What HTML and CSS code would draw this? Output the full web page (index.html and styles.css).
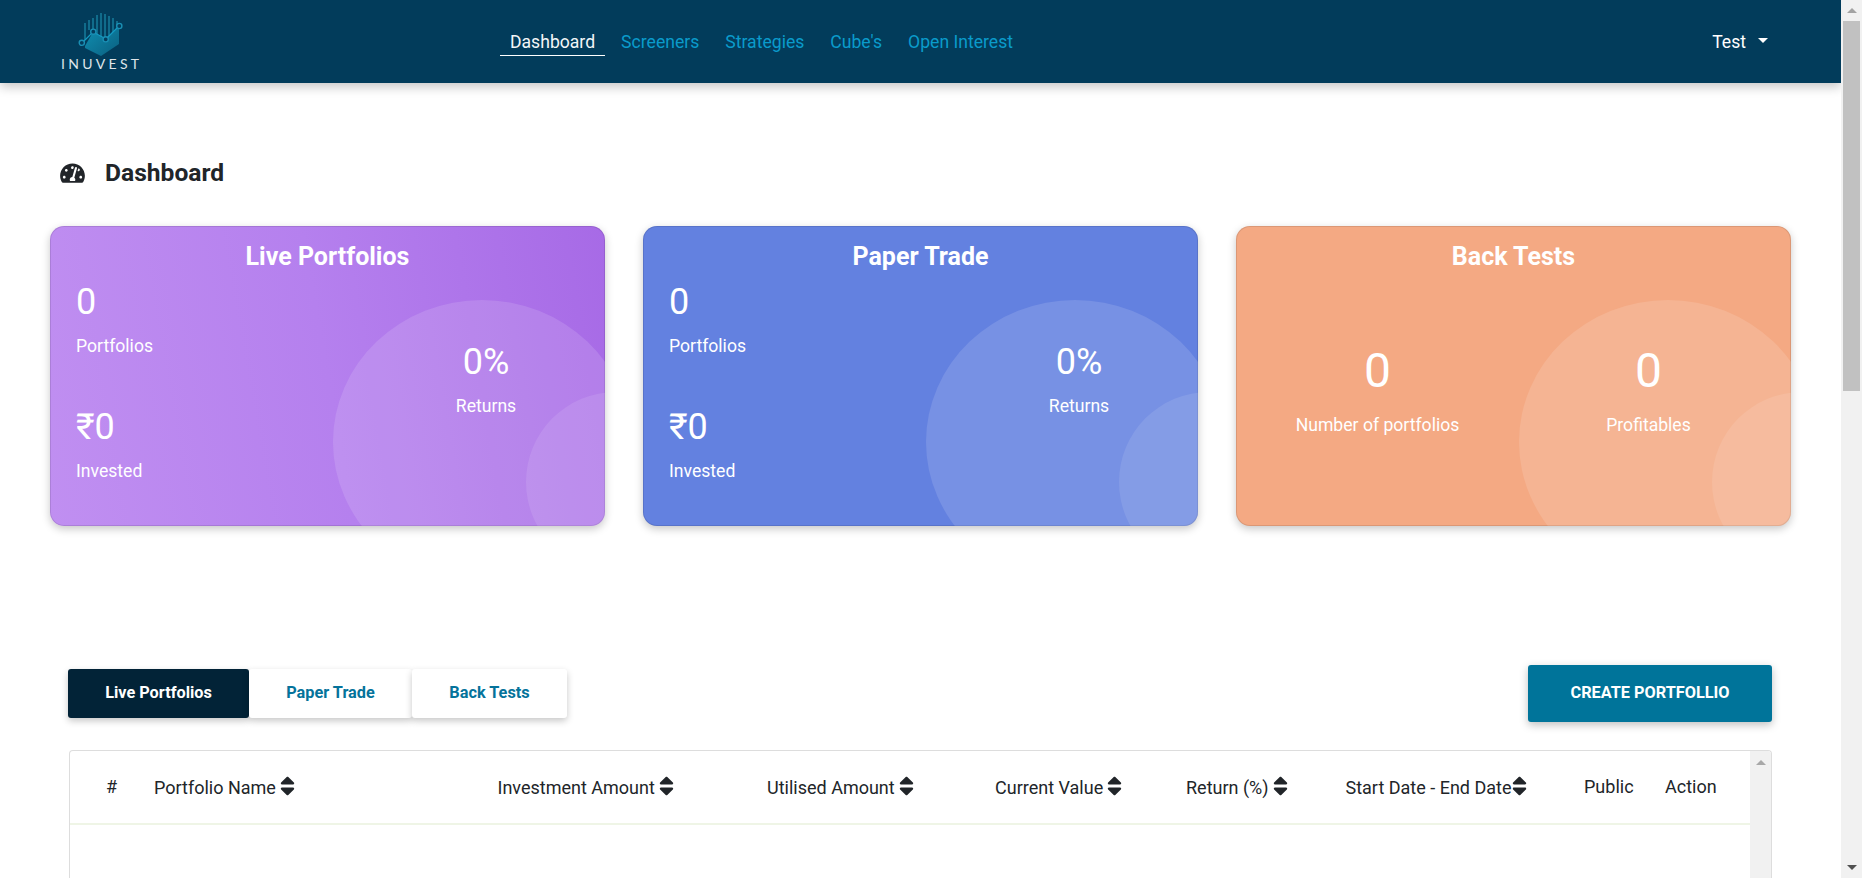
FILE: index.html
```html
<!DOCTYPE html>
<html lang="en">
<head>
<meta charset="utf-8">
<title>Inuvest Dashboard</title>
<link rel="stylesheet" href="styles.css">
</head>
<body>
<div class="viewport">
  <div class="page">
    <header class="navbar">
      <a class="brand" href="#">
        <svg class="brand-mark" viewBox="0 0 46 44" aria-hidden="true">
          <defs>
            <linearGradient id="lg" x1="0" y1="0" x2="1" y2="1">
              <stop offset="0" stop-color="#1090b2"/>
              <stop offset="1" stop-color="#0a5f80"/>
            </linearGradient>
          </defs>
          <g stroke="#1a86a6" stroke-width="1.3">
            <path d="M7 10V27M11 7V17M15 5V17M19 2V24M23 0V24M27 1V24M31 3V24M35 5V19M39 8V14"/>
          </g>
          <path fill="url(#lg)" d="M7 33L15 19L27 26L41 13V31L23 43L7 35Z"/>
          <path fill="none" stroke="#149ac2" stroke-width="1.2" d="M4 30L15 19L28 26L41 13"/>
          <g fill="#033c5c" stroke="#1a8fb4" stroke-width="1.4">
            <circle cx="3.8" cy="29.8" r="2.6"/>
            <circle cx="15.3" cy="18.7" r="2.6"/>
            <circle cx="27.7" cy="26.3" r="2.6"/>
            <circle cx="41.3" cy="13" r="2.6"/>
          </g>
        </svg>
        <span class="brand-name">INUVEST</span>
      </a>
      <nav class="nav-links">
        <a class="nav-link active" href="#">Dashboard</a>
        <a class="nav-link" href="#">Screeners</a>
        <a class="nav-link" href="#">Strategies</a>
        <a class="nav-link" href="#">Cube's</a>
        <a class="nav-link" href="#">Open Interest</a>
      </nav>
      <a class="user-menu" href="#">Test<span class="caret"></span></a>
    </header>

    <main>
      <h1 class="page-title">
        <svg class="title-icon" viewBox="0 0 576 512" aria-hidden="true"><path fill="currentColor" d="M288 32C128.94 32 0 160.94 0 320c0 52.8 14.25 102.26 39.06 144.8 5.61 9.62 16.3 15.2 27.44 15.2h443c11.14 0 21.83-5.58 27.44-15.2C561.75 422.26 576 372.8 576 320c0-159.06-128.94-288-288-288zm0 64c14.71 0 26.58 10.13 30.32 23.65-1.11 2.26-2.64 4.23-3.35 6.67l-9.22 32.26c-5.72 4.15-12.4 7.1-18.74 7.1-17.67 0-32-14.33-32-32 0-17.67 14.33-32 32-32zM96 384c-17.67 0-32-14.33-32-32s14.33-32 32-32 32 14.33 32 32-14.33 32-32 32zm48-160c-17.67 0-32-14.33-32-32s14.33-32 32-32 32 14.33 32 32-14.33 32-32 32zm246.77-72.41l-61.33 214.59c14.56 10.72 24.56 27.36 24.56 46.82 0 11.72-3.38 22.55-8.88 32H232.88c-5.5-9.45-8.88-20.28-8.88-32 0-33.94 26.5-61.43 59.9-63.59l61.34-214.62c3.59-12.72 16.91-20.22 29.66-16.47 12.72 3.63 20.09 16.91 16.47 29.67zm14.66 57.2l15.52-54.31c2.27-2.22 4.44-3.55 6.05-3.48 17.67 0 32 14.33 32 32 0 17.67-14.33 32-32 32-8.6 0-15.86-3.4-21.57-6.21zM480 384c-17.67 0-32-14.33-32-32s14.33-32 32-32 32 14.33 32 32-14.33 32-32 32z"/></svg>
        Dashboard
      </h1>

      <section class="cards">
        <article class="card card-live">
          <span class="circle circle-lg"></span><span class="circle circle-sm"></span>
          <h2 class="card-title">Live Portfolios</h2>
          <div class="card-body">
            <div class="card-left">
              <div class="stat"><div class="stat-value">0</div><div class="stat-label">Portfolios</div></div>
              <div class="stat"><div class="stat-value">₹0</div><div class="stat-label">Invested</div></div>
            </div>
            <div class="stat card-right"><div class="stat-value">0%</div><div class="stat-label">Returns</div></div>
          </div>
        </article>
        <article class="card card-paper">
          <span class="circle circle-lg"></span><span class="circle circle-sm"></span>
          <h2 class="card-title">Paper Trade</h2>
          <div class="card-body">
            <div class="card-left">
              <div class="stat"><div class="stat-value">0</div><div class="stat-label">Portfolios</div></div>
              <div class="stat"><div class="stat-value">₹0</div><div class="stat-label">Invested</div></div>
            </div>
            <div class="stat card-right"><div class="stat-value">0%</div><div class="stat-label">Returns</div></div>
          </div>
        </article>
        <article class="card card-back">
          <span class="circle circle-lg"></span><span class="circle circle-sm"></span>
          <h2 class="card-title">Back Tests</h2>
          <div class="card-body-back">
            <div class="stat stat-big"><div class="stat-value">0</div><div class="stat-label">Number of portfolios</div></div>
            <div class="stat stat-big"><div class="stat-value">0</div><div class="stat-label">Profitables</div></div>
          </div>
        </article>
      </section>

      <section class="actions">
        <div class="tabs">
          <button class="tab tab-live active">Live Portfolios</button>
          <button class="tab tab-paper">Paper Trade</button>
          <button class="tab tab-back">Back Tests</button>
        </div>
        <button class="create-btn">CREATE PORTFOLLIO</button>
      </section>

      <section class="table-box">
        <div class="table-wrap">
          <table class="data-table">
            <colgroup>
              <col class="c-idx"><col class="c-name"><col class="c-inv"><col class="c-util"><col class="c-cur"><col class="c-ret"><col class="c-date"><col class="c-pub"><col class="c-act">
            </colgroup>
            <thead>
              <tr>
                <th class="th-idx">#</th>
                <th>Portfolio Name<svg class="sort" viewBox="0 0 320 512"><path fill="currentColor" d="M41 288h238c21.4 0 32.1 25.9 17 41L177 448c-9.4 9.4-24.6 9.4-33.9 0L24 329c-15.1-15.1-4.4-41 17-41zm255-105L177 64c-9.4-9.4-24.6-9.4-33.9 0L24 183c-15.1 15.1-4.4 41 17 41h238c21.4 0 32.1-25.9 17-41z"/></svg></th>
                <th>Investment Amount<svg class="sort" viewBox="0 0 320 512"><path fill="currentColor" d="M41 288h238c21.4 0 32.1 25.9 17 41L177 448c-9.4 9.4-24.6 9.4-33.9 0L24 329c-15.1-15.1-4.4-41 17-41zm255-105L177 64c-9.4-9.4-24.6-9.4-33.9 0L24 183c-15.1 15.1-4.4 41 17 41h238c21.4 0 32.1-25.9 17-41z"/></svg></th>
                <th>Utilised Amount<svg class="sort" viewBox="0 0 320 512"><path fill="currentColor" d="M41 288h238c21.4 0 32.1 25.9 17 41L177 448c-9.4 9.4-24.6 9.4-33.9 0L24 329c-15.1-15.1-4.4-41 17-41zm255-105L177 64c-9.4-9.4-24.6-9.4-33.9 0L24 183c-15.1 15.1-4.4 41 17 41h238c21.4 0 32.1-25.9 17-41z"/></svg></th>
                <th>Current Value<svg class="sort" viewBox="0 0 320 512"><path fill="currentColor" d="M41 288h238c21.4 0 32.1 25.9 17 41L177 448c-9.4 9.4-24.6 9.4-33.9 0L24 329c-15.1-15.1-4.4-41 17-41zm255-105L177 64c-9.4-9.4-24.6-9.4-33.9 0L24 183c-15.1 15.1-4.4 41 17 41h238c21.4 0 32.1-25.9 17-41z"/></svg></th>
                <th>Return (%)<svg class="sort" viewBox="0 0 320 512"><path fill="currentColor" d="M41 288h238c21.4 0 32.1 25.9 17 41L177 448c-9.4 9.4-24.6 9.4-33.9 0L24 329c-15.1-15.1-4.4-41 17-41zm255-105L177 64c-9.4-9.4-24.6-9.4-33.9 0L24 183c-15.1 15.1-4.4 41 17 41h238c21.4 0 32.1-25.9 17-41z"/></svg></th>
                <th>Start Date - End Date<svg class="sort sort-tight" viewBox="0 0 320 512"><path fill="currentColor" d="M41 288h238c21.4 0 32.1 25.9 17 41L177 448c-9.4 9.4-24.6 9.4-33.9 0L24 329c-15.1-15.1-4.4-41 17-41zm255-105L177 64c-9.4-9.4-24.6-9.4-33.9 0L24 183c-15.1 15.1-4.4 41 17 41h238c21.4 0 32.1-25.9 17-41z"/></svg></th>
                <th>Public</th>
                <th>Action</th>
              </tr>
            </thead>
          </table>
        </div>
        <div class="scrollbar scrollbar-inner"><span class="arrow-up arrow-light"></span></div>
      </section>
    </main>
  </div>
  <div class="scrollbar scrollbar-page">
    <span class="arrow-up"></span>
    <span class="thumb"></span>
    <span class="spacer"></span>
    <span class="arrow-down"></span>
  </div>
</div>
</body>
</html>
```
FILE: styles.css
```css
* { box-sizing: border-box; }
html, body { margin: 0; padding: 0; height: 878px; overflow: hidden; }
body { font-family: Roboto, "Liberation Sans", sans-serif; font-size: 17.6px; color: #212529; background: #fff; }
a { text-decoration: none; }

.viewport { display: flex; height: 878px; }
.page { flex: 1; min-width: 0; overflow: hidden; }

/* navbar */
.navbar { height: 83px; background: #023c5b; display: flex; align-items: flex-start; box-shadow: 0 4px 10px rgba(0,0,0,.22); position: relative; z-index: 2; }
.brand { width: 500px; padding: 13px 0 0 61px; display: flex; flex-direction: column; align-items: flex-start; }
.brand-mark { width: 46px; height: 44px; margin-left: 17px; display: block; }
.brand-name { font-family: Lato, Roboto, sans-serif; font-weight: 400; font-size: 14px; line-height: 14px; letter-spacing: 3.3px; color: #dfe5e9; margin-top: 0; }
.nav-links { display: flex; gap: 6px; padding-top: 30px; }
.nav-link { color: #0a9bcb; padding: 0 10px; line-height: 24px; height: 25.5px; }
.nav-link.active { color: #f2f6f8; border-bottom: 1.5px solid #fff; }
.user-menu { margin-left: auto; margin-right: 73px; margin-top: 30px; line-height: 24px; color: #fff; display: flex; align-items: center; }
.caret { width: 0; height: 0; margin-left: 12px; border-left: 5.5px solid transparent; border-right: 5.5px solid transparent; border-top: 5.5px solid #fff; margin-top: -3px; }

/* heading */
.page-title { margin: 72px 0 35px 60px; height: 36px; display: flex; align-items: center; font-size: 24.6px; font-weight: 700; line-height: 36px; }
.title-icon { width: 25px; height: 22px; margin-right: 20px; }

/* cards */
.cards { display: grid; grid-template-columns: repeat(3, 1fr); gap: 38px; padding: 0 50px; }
.card { position: relative; height: 300px; border-radius: 14px; overflow: hidden; color: #fff; box-shadow: inset 0 0 0 1px rgba(0,0,0,.1), 0 3px 9px rgba(0,0,0,.22); padding-top: 13px; }
.card-live { background: linear-gradient(80deg, #c08ff1 0%, #b580ee 50%, #a76ae6 100%); }
.card-paper { background: #6381e0; }
.card-back { background: #f4a983; }
.circle { position: absolute; border-radius: 50%; background: rgba(255,255,255,.13); }
.circle-lg { width: 298px; height: 284px; left: 283px; top: 74px; }
.circle-sm { width: 180px; height: 180px; left: 476px; top: 166px; background: rgba(255,255,255,.1); }
.card-title { position: relative; margin: 0; text-align: center; font-size: 25px; font-weight: 700; line-height: 36px; }
.card-body { position: relative; display: grid; grid-template-columns: 1fr 238px; padding: 7px 0 0 26px; }
.card-right { text-align: center; padding-top: 60px; }
.stat-value { font-size: 36px; line-height: 40px; font-weight: 400; }
.stat-label { margin-top: 12px; line-height: 24px; }
.card-left .stat + .stat { margin-top: 49px; }
.card-body-back { position: relative; display: grid; grid-template-columns: 271px 271px; padding: 68px 6px 0; text-align: center; }
.stat-big .stat-value { font-size: 48px; line-height: 56px; }
.stat-big .stat-label { margin-top: 14px; }

/* actions */
.actions { display: flex; align-items: center; justify-content: space-between; margin: 139px 69px 28px 68px; }
.tabs { display: flex; }
.tab { border: 0; background: #fff; color: #05739b; height: 49px; font: 700 16.3px Roboto, sans-serif; border-radius: 3px; box-shadow: 0 3px 7px rgba(0,0,0,.22); padding: 0 0 2px; }
.tab-live { width: 181px; }
.tab-paper { width: 163px; }
.tab-back { width: 155px; }
.tab.active { background: #022337; color: #fff; }
.create-btn { width: 244px; height: 57px; border: 0; border-radius: 3px; background: #00749a; color: #fff; font: 700 16.3px Roboto, sans-serif; box-shadow: 0 3px 8px rgba(0,0,0,.25); padding: 0 0 2px; }

/* table */
.table-box { display: flex; margin: 0 69px; height: 200px; border: 1px solid #ddd; border-bottom: 0; border-radius: 4px 4px 0 0; overflow: hidden; }
.table-wrap { flex: 1; min-width: 0; }
.data-table { width: 100%; table-layout: fixed; border-collapse: collapse; font-size: 18px; }
.data-table th { height: 73px; padding: 0 0 2px; text-align: left; font-weight: 400; white-space: nowrap; border-bottom: 2px solid #eff5e6; color: #212529; }
.data-table .th-idx { padding-left: 36px; }
.c-idx { width: 84px; }
.c-name { width: 343.5px; }
.c-inv { width: 269.5px; }
.c-util { width: 228px; }
.c-cur { width: 191px; }
.c-ret { width: 159.5px; }
.c-date { width: 238.5px; }
.c-pub { width: 81px; }
.c-act { width: 85px; }
.sort { width: 15px; height: 24px; margin-left: 4px; vertical-align: -4px; color: #212529; }
.sort-tight { margin-left: 0; }

/* scrollbars */
.scrollbar { background: #f1f1f1; display: flex; flex-direction: column; align-items: center; }
.scrollbar-page { width: 21px; height: 878px; padding-top: 8px; }
.scrollbar-inner { width: 21px; padding-top: 9px; }
.arrow-up { width: 0; height: 0; border-left: 5px solid transparent; border-right: 5px solid transparent; border-bottom: 5px solid #a3a3a3; }
.arrow-light { border-bottom-color: #a8a8a8; }
.arrow-down { width: 0; height: 0; border-left: 5px solid transparent; border-right: 5px solid transparent; border-top: 5px solid #505050; margin-bottom: 8px; }
.thumb { width: 17px; height: 370px; background: #c1c1c1; margin-top: 8px; }
.spacer { flex: 1; }
```
